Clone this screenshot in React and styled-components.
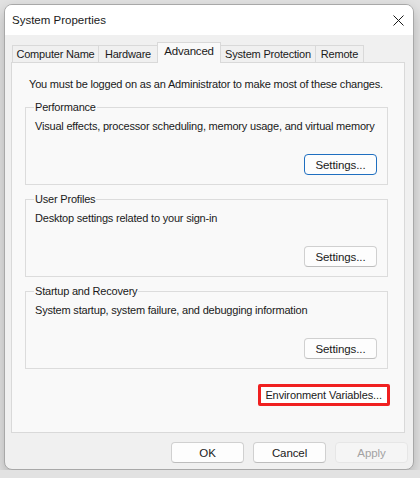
import React from 'react';
import styled, { createGlobalStyle } from 'styled-components';

const GlobalStyle = createGlobalStyle`
  body {
    margin: 0;
    background: #e2e2e2;
    font-family: "Liberation Sans", Arial, sans-serif;
    font-size: 11px;
    letter-spacing: -0.2px;
    color: #1a1a1a;
  }
`

const Window = styled.div`
  margin: 4px 0 0 4px;
  width: 410px;
  height: 466px;
  box-sizing: border-box;
  border: 1px solid #a8a8a8;
  border-radius: 8px;
  background: #f0f0f0;
  box-shadow: 0 6px 14px rgba(0, 0, 0, 0.22);
  display: flex;
  flex-direction: column;
  overflow: hidden;
`

const TitleBar = styled.div`
  height: 30px;
  background: #ffffff;
  display: flex;
  align-items: center;
  justify-content: space-between;
  padding: 0 9px 0 7px;
  font-size: 11.5px;
  letter-spacing: 0;
`

const CloseButton = styled.div`
  width: 12px;
  height: 12px;
  display: flex;
  align-items: center;
  justify-content: center;
  margin-top: 1px;
`

const Body = styled.div`
  flex: 1;
  display: flex;
  flex-direction: column;
  padding: 7px 8px 0 6px;
`

const TabStrip = styled.div`
  display: flex;
  align-items: flex-end;
  height: 21px;
  padding-left: 1px;
  margin-bottom: -1px;
  position: relative;
  z-index: 1;
`

const Tab = styled.div`
  box-sizing: border-box;
  width: ${p => p.$w}px;
  height: ${p => (p.$active ? 21 : 18)}px;
  border: 1px solid #d9d9d9;
  border-left-width: ${p => (p.$first || p.$active ? 1 : 0)}px;
  border-right-width: ${p => (p.$beforeActive ? 0 : 1)}px;
  border-bottom: ${p => (p.$active ? 'none' : '1px solid #d9d9d9')};
  background: ${p => (p.$active ? '#f9f9f9' : '#f0f0f0')};
  display: flex;
  align-items: ${p => (p.$active ? 'flex-start' : 'center')};
  padding-top: ${p => (p.$active ? 2 : 0)}px;
  justify-content: center;
  white-space: nowrap;
  font-size: ${p => (p.$active ? 11.5 : 11)}px;
`

const Panel = styled.div`
  box-sizing: border-box;
  height: 371px;
  border: 1px solid #d9d9d9;
  background: #f9f9f9;
  padding: 13px 16px 0 13px;
  display: flex;
  flex-direction: column;
`

const Notice = styled.div`
  line-height: 16px;
  padding-left: 4px;
  margin-bottom: 7px;
  white-space: nowrap;
`

const Group = styled.fieldset`
  margin: 0 0 6px 0;
  border: 1px solid #dcdcdc;
  padding: 3px 10px 9px 9px;
  display: flex;
  flex-direction: column;
  min-width: 0;
`

const Legend = styled.legend`
  padding: 0 1px;
  margin-left: -1px;
  line-height: 16px;
`

const GroupText = styled.div`
  line-height: 16px;
  white-space: nowrap;
`

const ButtonRow = styled.div`
  display: flex;
  justify-content: flex-end;
  margin-top: ${p => p.$top || 0}px;
`

const Button = styled.button`
  box-sizing: border-box;
  width: ${p => p.$w || 73}px;
  height: 21px;
  border: 1px solid ${p => (p.$default ? '#1f6fc0' : p.disabled ? '#e6e6e6' : '#d0d0d0')};
  border-bottom-color: ${p => (p.$default ? '#1f6fc0' : p.disabled ? '#e6e6e6' : '#bdbdbd')};
  border-radius: 4px;
  background: ${p => (p.disabled ? '#f5f5f5' : '#fdfdfd')};
  color: ${p => (p.disabled ? '#a2a2a2' : '#1a1a1a')};
  font-family: inherit;
  font-size: 11.5px;
  letter-spacing: -0.1px;
  padding: 0;
  white-space: nowrap;
`

const Highlight = styled.div`
  box-sizing: border-box;
  border: 3px solid #f02020;
  border-radius: 2px;
  background: #ffffff;
  height: 22px;
  padding: 0 5px 0 4px;
  display: flex;
  align-items: center;
  margin-right: -2px;
  white-space: nowrap;
  font-size: 11px;
  letter-spacing: -0.1px;
`

const Footer = styled.div`
  display: flex;
  justify-content: flex-end;
  gap: 9px;
  padding: 9px 0 0 0;
  margin-right: -3px;
`

const tabs = [
  { label: 'Computer Name', w: 87 },
  { label: 'Hardware', w: 58 },
  { label: 'Advanced', w: 64, active: true },
  { label: 'System Protection', w: 95 },
  { label: 'Remote', w: 48 },
]

const groups = [
  { title: 'Performance', text: 'Visual effects, processor scheduling, memory usage, and virtual memory', focused: true },
  { title: 'User Profiles', text: 'Desktop settings related to your sign-in' },
  { title: 'Startup and Recovery', text: 'System startup, system failure, and debugging information' },
]

const App = () => {
  return (
    <>
      <GlobalStyle />
      <Window>
        <TitleBar>
          <span>System Properties</span>
          <CloseButton>
            <svg width="11" height="11" viewBox="0 0 11 11">
              <path d="M0.5 0.5 L10.5 10.5 M10.5 0.5 L0.5 10.5" stroke="#1a1a1a" strokeWidth="1" />
            </svg>
          </CloseButton>
        </TitleBar>
        <Body>
          <TabStrip>
            {tabs.map((t, i) => (
              <Tab
                key={t.label}
                $w={t.w}
                $active={t.active}
                $first={i === 0}
                $beforeActive={tabs[i + 1] && tabs[i + 1].active}
              >
                {t.label}
              </Tab>
            ))}
          </TabStrip>
          <Panel>
            <Notice>You must be logged on as an Administrator to make most of these changes.</Notice>
            {groups.map(g => (
              <Group key={g.title}>
                <Legend>{g.title}</Legend>
                <GroupText>{g.text}</GroupText>
                <ButtonRow $top={20}>
                  <Button $default={g.focused}>Settings...</Button>
                </ButtonRow>
              </Group>
            ))}
            <ButtonRow $top={9}>
              <Highlight>Environment Variables...</Highlight>
            </ButtonRow>
          </Panel>
          <Footer>
            <Button>OK</Button>
            <Button>Cancel</Button>
            <Button disabled>Apply</Button>
          </Footer>
        </Body>
      </Window>
    </>
  )
}

export default App;
